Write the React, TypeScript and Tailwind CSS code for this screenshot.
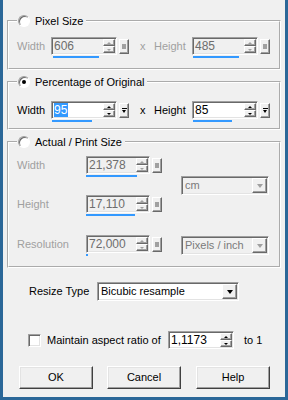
// Resize dialog — classic Windows look, three size groups plus resample options.

const sunken =
  "border border-t-[#a0a0a0] border-l-[#a0a0a0] border-b-white border-r-white shadow-[inset_1px_1px_0_#696969,inset_-1px_-1px_0_#e3e3e3]";
const raised =
  "border border-t-white border-l-white border-b-[#696969] border-r-[#696969] shadow-[inset_-1px_-1px_0_#a0a0a0]";
// etched group frame: groove on white gives a grey line with a white line beside it
const etched = "border-2 border-white [border-style:groove]";

function Radio({ checked }: { checked?: boolean }) {
  return (
    <span className="flex h-[12px] w-[12px] shrink-0 items-center justify-center rounded-full border border-t-[#a0a0a0] border-l-[#a0a0a0] border-r-white border-b-white bg-white shadow-[inset_1px_1px_0_#696969]">
      {checked && <span className="h-[4px] w-[4px] rounded-full bg-black" />}
    </span>
  );
}

function Arrow({ up, on, big }: { up?: boolean; on: boolean; big?: boolean }) {
  if (big) {
    return (
      <span
        className={`h-0 w-0 border-x-[3px] border-t-[4px] border-x-transparent ${
          on ? "border-t-black" : "border-t-[#a0a0a0]"
        }`}
      />
    );
  }
  return up ? (
    <span
      className={`h-0 w-0 border-x-[2px] border-b-[2px] border-x-transparent ${
        on ? "border-b-black" : "border-b-[#a0a0a0]"
      }`}
    />
  ) : (
    <span
      className={`h-0 w-0 border-x-[2px] border-t-[2px] border-x-transparent ${
        on ? "border-t-black" : "border-t-[#a0a0a0]"
      }`}
    />
  );
}

function Spinner({ on }: { on: boolean }) {
  return (
    <div className="flex h-full w-[12px] shrink-0 flex-col">
      <div className={`${raised} flex flex-1 items-center justify-center bg-[#f0f0f0]`}>
        <Arrow up on={on} />
      </div>
      <div className={`${raised} flex flex-1 items-center justify-center bg-[#f0f0f0]`}>
        <Arrow on={on} />
      </div>
    </div>
  );
}

/** the little square button beside each size field */
function SideBox({ on }: { on: boolean }) {
  return (
    <div className={`${raised} flex h-[15px] w-[10px] shrink-0 items-center justify-center bg-[#f0f0f0]`}>
      {on ? (
        <span className="flex flex-col items-center gap-[1px]">
          <span className="h-px w-[5px] bg-black" />
          <span className="h-0 w-0 border-x-[2.5px] border-t-[3px] border-x-transparent border-t-black" />
        </span>
      ) : (
        <span className="h-[5px] w-[4px] bg-[#a0a0a0]" />
      )}
    </div>
  );
}

function SpinEdit({
  value,
  width,
  on,
  selected,
  line,
  lineLeft = "ml-0",
  box = true,
}: {
  value: string;
  width: string;
  on: boolean;
  selected?: boolean;
  line?: number;
  lineLeft?: string;
  box?: boolean;
}) {
  return (
    <div className="flex flex-col">
      <div className="flex items-center gap-[2px]">
        <div className={`${sunken} flex h-[18px] p-[1px] ${width} ${on ? "bg-white" : "bg-[#f0f0f0]"}`}>
          <span className={`flex-1 pl-[1px] text-[12px] leading-[14px] ${on ? "text-black" : "text-[#6d6d6d]"}`}>
            {selected ? <span className="bg-[#3399ff] pr-[1px] text-white">{value}</span> : value}
          </span>
          <Spinner on={on} />
        </div>
        {box && <SideBox on={on} />}
      </div>
      {line !== undefined && (
        <div className={`mt-[1px] h-[2px] bg-[#3399ff] ${lineLeft}`} style={{ width: line }} />
      )}
    </div>
  );
}

function Combo({ value, on, width, className = "" }: { value: string; on: boolean; width: string; className?: string }) {
  return (
    <div className={`${sunken} flex h-[19px] p-[1px] ${width} ${on ? "bg-white" : "bg-[#f0f0f0]"} ${className}`}>
      <span className={`flex-1 pl-[2px] leading-[15px] ${on ? "text-black" : "text-[#7a7a7a]"}`}>{value}</span>
      <div className={`${raised} flex w-[15px] items-center justify-center bg-[#f0f0f0]`}>
        <Arrow big on={on} />
      </div>
    </div>
  );
}

function Legend({ label, checked }: { label: string; checked?: boolean }) {
  return (
    <legend className="pl-[1px] pr-[3px]">
      <span className="flex h-[14px] items-center gap-[5px]">
        <Radio checked={checked} />
        <span className="leading-[14px]">{label}</span>
      </span>
    </legend>
  );
}

function Label({ children, width, on }: { children: string; width: string; on: boolean }) {
  return (
    <span className={`h-[18px] shrink-0 leading-[18px] ${width} ${on ? "text-black" : "text-[#a0a0a0]"}`}>
      {children}
    </span>
  );
}

function PairRow({
  on,
  w,
  h,
  wLine,
  hLine,
  wLeft,
  selected,
}: {
  on: boolean;
  w: string;
  h: string;
  wLine: number;
  hLine: number;
  wLeft: string;
  selected?: boolean;
}) {
  return (
    <div className="flex items-start">
      <Label width="w-[34px]" on={on}>Width</Label>
      <SpinEdit value={w} width="w-[66px]" on={on} selected={selected} line={wLine} lineLeft={wLeft} />
      <span className={`ml-[11px] h-[18px] w-[14px] leading-[18px] ${on ? "text-black" : "text-[#a0a0a0]"}`}>x</span>
      <Label width="w-[38px]" on={on}>Height</Label>
      <SpinEdit value={h} width="w-[66px]" on={on} line={hLine} lineLeft="ml-[1px]" />
    </div>
  );
}

function Button({ children }: { children: string }) {
  return (
    <button
      type="button"
      className="flex h-[23px] w-[74px] items-center justify-center border border-t-white border-l-white border-b-[#404040] border-r-[#404040] bg-[#f0f0f0] shadow-[inset_-1px_-1px_0_#a0a0a0,inset_1px_1px_0_#e3e3e3] text-[11px] text-black"
    >
      {children}
    </button>
  );
}

export default function App() {
  return (
    <div className="h-[400px] w-[288px] overflow-hidden border-x-[3px] border-b-[3px] border-[#2b6798] bg-[#f0f0f0] font-['Liberation_Sans',Arial,sans-serif] text-[11px] text-black">
      <fieldset className={`ml-[4px] mt-[14px] w-[274px] ${etched} px-[8px] pb-[10px] pt-[9px]`}>
        <Legend label="Pixel Size" />
        <PairRow on={false} w="606" h="485" wLine={46} hLine={46} wLeft="ml-[2px]" />
      </fieldset>

      <fieldset className={`ml-[4px] mt-[5px] w-[274px] ${etched} px-[8px] pb-[6px] pt-[12px]`}>
        <Legend label="Percentage of Original" checked />
        <PairRow on w="95" h="85" wLine={40} hLine={39} wLeft="ml-[1px]" selected />
      </fieldset>

      <fieldset className={`ml-[4px] mt-[5px] w-[274px] ${etched} px-[8px] pb-[10px] pt-[7px]`}>
        <Legend label="Actual / Print Size" />
        <div className="flex">
          <div className="flex flex-col">
            <div className="flex items-start">
              <Label width="w-[69px]" on={false}>Width</Label>
              <SpinEdit value="21,378" width="w-[64px]" on={false} line={51} />
            </div>
            <div className="mt-[18px] flex items-start">
              <Label width="w-[69px]" on={false}>Height</Label>
              <SpinEdit value="17,110" width="w-[64px]" on={false} line={49} />
            </div>
            <div className="mt-[19px] flex items-start">
              <Label width="w-[69px]" on={false}>Resolution</Label>
              <SpinEdit value="72,000" width="w-[64px]" on={false} line={2} />
            </div>
          </div>
          <div className="ml-[19px] flex flex-col pt-[20px]">
            <Combo value="cm" on={false} width="w-[88px]" />
            <Combo value="Pixels / inch" on={false} width="w-[88px]" className="mt-[41px]" />
          </div>
        </div>
      </fieldset>

      <div className="ml-[26px] mt-[14px] flex items-center">
        <span className="w-[68px] shrink-0">Resize Type</span>
        <Combo value="Bicubic resample" on width="w-[142px]" />
      </div>

      <div className="ml-[25px] mt-[30px] flex items-center">
        <span className={`${sunken} h-[13px] w-[13px] shrink-0 bg-white`} />
        <span className="ml-[6px] w-[121px] shrink-0">Maintain aspect ratio of</span>
        <SpinEdit value="1,1173" width="w-[66px]" on box={false} />
        <span className="ml-[10px]">to 1</span>
      </div>

      <div className="ml-[16px] mt-[17px] flex">
        <Button>OK</Button>
        <div className="ml-[14px]">
          <Button>Cancel</Button>
        </div>
        <div className="ml-[15px]">
          <Button>Help</Button>
        </div>
      </div>
    </div>
  );
}
